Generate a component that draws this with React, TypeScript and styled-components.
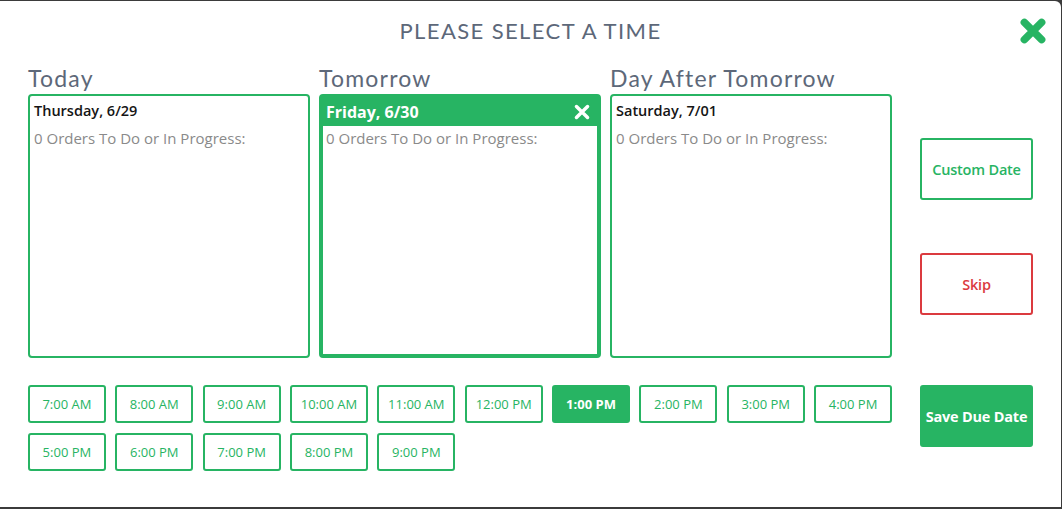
import React from "react";
import styled, { createGlobalStyle } from "styled-components";

const GREEN = "#27b463";
const RED = "#db3a3f";
const SLATE = "#5d6879";

const Global = createGlobalStyle`
  html, body { margin: 0; padding: 0; background: #3b3b3b; }
  body { width: 1062px; height: 509px; overflow: hidden; font-family: "Open Sans", "Noto Sans", sans-serif; }
  * { box-sizing: border-box; }
`;

const Modal = styled.div`
  position: relative;
  margin-top: 1px;
  width: 1061px;
  height: 506px;
  background: #fff;
  border-radius: 0 6px 0 0;
  display: flex;
  flex-direction: column;
`;

const Header = styled.div`
  height: 58px;
  display: flex;
  align-items: center;
  justify-content: center;
`;

const Title = styled.h1`
  margin: 0;
  font-family: Lato, "Noto Sans", sans-serif;
  font-weight: 400;
  font-size: 22px;
  letter-spacing: 1.4px;
  color: ${SLATE};
`;

const CloseButton = styled.button`
  position: absolute;
  top: 16px;
  right: 14px;
  width: 28px;
  height: 28px;
  padding: 0;
  border: 0;
  background: transparent;
  display: flex;
  align-items: center;
  justify-content: center;
`;

const Body = styled.div`
  margin-top: 5px;
  padding: 0 28px;
  display: flex;
  gap: 28px;
`;

const Left = styled.div`
  width: 864px;
  display: flex;
  flex-direction: column;
`;

const Days = styled.div`
  display: grid;
  grid-template-columns: repeat(3, 282px);
  column-gap: 9px;
`;

const DayColumn = styled.div`
  display: flex;
  flex-direction: column;
`;

const DayLabel = styled.div`
  height: 30px;
  line-height: 29px;
  font-family: Lato, "Noto Sans", sans-serif;
  font-size: 23px;
  letter-spacing: 1.2px;
  color: ${SLATE};
`;

const Card = styled.div<{ $selected?: boolean }>`
  height: 264px;
  border: ${(p) => (p.$selected ? 4 : 2)}px solid ${GREEN};
  border-radius: 4px;
  display: flex;
  flex-direction: column;
`;

const CardHeader = styled.div<{ $selected?: boolean }>`
  height: ${(p) => (p.$selected ? 28 : 30)}px;
  padding: ${(p) => (p.$selected ? "0 6px 0 3px" : "5px 4px 0")};
  display: flex;
  align-items: ${(p) => (p.$selected ? "center" : "flex-start")};
  justify-content: space-between;
  background: ${(p) => (p.$selected ? GREEN : "transparent")};
  color: ${(p) => (p.$selected ? "#fff" : "#151515")};
  font-size: ${(p) => (p.$selected ? 16 : 14.5)}px;
  font-weight: ${(p) => (p.$selected ? 700 : 600)};
  line-height: 20px;
`;

const CardText = styled.div<{ $selected?: boolean }>`
  padding: ${(p) => (p.$selected ? "2px 3px" : "2px 4px")};
  font-size: 15px;
  line-height: 20px;
  color: #8a8a8a;
`;

const Times = styled.div`
  margin-top: 27px;
  display: grid;
  grid-template-columns: repeat(10, 1fr);
  column-gap: 9.5px;
  row-gap: 10px;
`;

const TimeButton = styled.button<{ $active?: boolean }>`
  height: 38px;
  padding: 0;
  border: 2px solid ${GREEN};
  border-radius: 3px;
  background: ${(p) => (p.$active ? GREEN : "#fff")};
  color: ${(p) => (p.$active ? "#fff" : GREEN)};
  font-family: "Open Sans", "Noto Sans", sans-serif;
  font-size: 13px;
  font-weight: ${(p) => (p.$active ? 700 : 500)};
`;

const Right = styled.div`
  width: 113px;
  padding-top: 74px;
  display: flex;
  flex-direction: column;
`;

const SideButton = styled.button<{ $variant: "outline" | "danger" | "solid"; $gap: number }>`
  margin-top: ${(p) => p.$gap}px;
  height: 62px;
  padding: 0;
  border: 2px solid ${(p) => (p.$variant === "danger" ? RED : GREEN)};
  border-radius: 3px;
  background: ${(p) => (p.$variant === "solid" ? GREEN : "#fff")};
  color: ${(p) => (p.$variant === "solid" ? "#fff" : p.$variant === "danger" ? RED : GREEN)};
  font-family: "Open Sans", "Noto Sans", sans-serif;
  font-size: 14.5px;
  font-weight: ${(p) => (p.$variant === "solid" ? 700 : 600)};
  letter-spacing: -0.2px;
`;

const XIcon = ({ size, color, w }: { size: number; color: string; w: number }) => (
  <svg width={size} height={size} viewBox="0 0 26 26">
    <path d="M5 5 L21 21 M21 5 L5 21" stroke={color} strokeWidth={w} strokeLinecap="round" />
  </svg>
);

const days = [
  { label: "Today", date: "Thursday, 6/29" },
  { label: "Tomorrow", date: "Friday, 6/30", selected: true },
  { label: "Day After Tomorrow", date: "Saturday, 7/01" },
];

const times = [
  "7:00 AM", "8:00 AM", "9:00 AM", "10:00 AM", "11:00 AM", "12:00 PM", "1:00 PM",
  "2:00 PM", "3:00 PM", "4:00 PM", "5:00 PM", "6:00 PM", "7:00 PM", "8:00 PM", "9:00 PM",
];

export default function App() {
  return (
    <>
      <Global />
      <Modal>
        <Header>
          <Title>PLEASE SELECT A TIME</Title>
        </Header>
        <CloseButton aria-label="Close">
          <XIcon size={28} color={GREEN} w={7} />
        </CloseButton>
        <Body>
          <Left>
            <Days>
              {days.map((d) => (
                <DayColumn key={d.label}>
                  <DayLabel>{d.label}</DayLabel>
                  <Card $selected={d.selected}>
                    <CardHeader $selected={d.selected}>
                      <span>{d.date}</span>
                      {d.selected && <XIcon size={18} color="#fff" w={5} />}
                    </CardHeader>
                    <CardText $selected={d.selected}>0 Orders To Do or In Progress:</CardText>
                  </Card>
                </DayColumn>
              ))}
            </Days>
            <Times>
              {times.map((t) => (
                <TimeButton key={t} $active={t === "1:00 PM"}>
                  {t}
                </TimeButton>
              ))}
            </Times>
          </Left>
          <Right>
            <SideButton $variant="outline" $gap={0}>Custom Date</SideButton>
            <SideButton $variant="danger" $gap={53}>Skip</SideButton>
            <SideButton $variant="solid" $gap={70}>Save Due Date</SideButton>
          </Right>
        </Body>
      </Modal>
    </>
  );
}
